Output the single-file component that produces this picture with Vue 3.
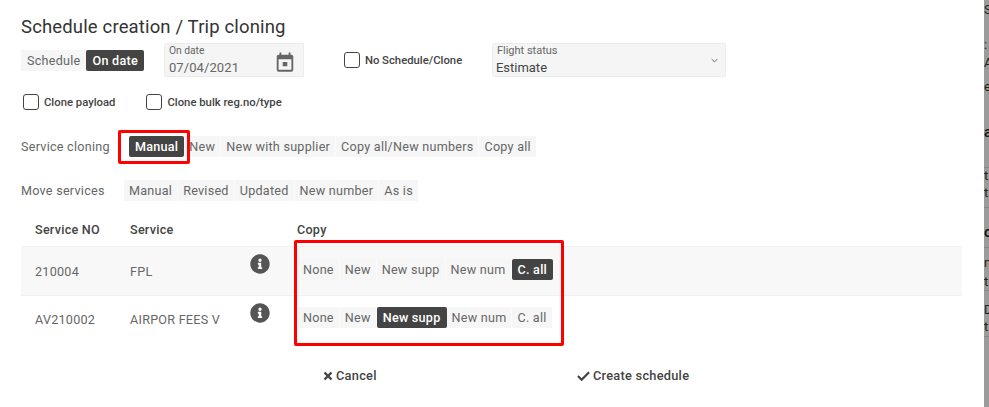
<template>
  <div class="page">
    <div class="dialog">
      <h2 class="title">Schedule creation / Trip cloning</h2>

      <div class="top-row">
        <div class="seg schedule-seg">
          <span class="seg-label">Schedule</span>
          <span class="seg-item active">On date</span>
        </div>
        <div class="field date-field">
          <div class="field-label">On date</div>
          <div class="field-value date-value">07/04/2021</div>
          <svg class="calendar" viewBox="0 0 24 24" width="22" height="22">
            <path fill="#666" fill-rule="evenodd" d="M8 1.500v2.500h8V1.500h2V4h1a2 2 0 0 1 2 2v14.500a2 2 0 0 1-2 2H5a2 2 0 0 1-2-2V6a2 2 0 0 1 2-2h1V1.500zM5 9v11.500h14V9zm4.500 3h5v4.500h-5z" />
          </svg>
        </div>
        <label class="check no-schedule"><span class="box"></span>No Schedule/Clone</label>
        <div class="field status-field">
          <div class="field-label">Flight status</div>
          <div class="field-value">Estimate</div>
          <svg class="chevron" viewBox="0 0 10 6" width="7" height="5">
            <path d="M1 1l4 4 4-4" fill="none" stroke="#666" stroke-width="1.4" />
          </svg>
        </div>
      </div>

      <div class="check-row">
        <label class="check"><span class="box"></span>Clone payload</label>
        <label class="check"><span class="box"></span>Clone bulk reg.no/type</label>
      </div>

      <div class="option-row cloning-row">
        <span class="row-label">Service cloning</span>
        <div class="seg">
          <span v-for="(o, i) in cloningOptions" :key="o" class="seg-item" :class="{ active: i === 0 }">{{ o }}</span>
        </div>
      </div>

      <div class="option-row move-row">
        <span class="row-label">Move services</span>
        <div class="seg">
          <span v-for="o in moveOptions" :key="o" class="seg-item">{{ o }}</span>
        </div>
      </div>

      <div class="table">
        <div class="table-head">
          <span>Service NO</span>
          <span>Service</span>
          <span></span>
          <span>Copy</span>
        </div>
        <div v-for="row in rows" :key="row.no" class="table-row" :class="{ shaded: row.shaded }">
          <span class="cell-text">{{ row.no }}</span>
          <span class="cell-text">{{ row.name }}</span>
          <svg class="info" viewBox="0 0 512 512" width="20" height="20">
            <path fill="#555" d="M256 8C119 8 8 119 8 256s111 248 248 248 248-111 248-248S393 8 256 8zm0 110a42 42 0 1 1 0 84 42 42 0 0 1 0-84zm56 254c0 7-5 12-12 12h-88c-7 0-12-5-12-12v-24c0-7 5-12 12-12h12v-64h-12c-7 0-12-5-12-12v-24c0-7 5-12 12-12h64c7 0 12 5 12 12v100h12c7 0 12 5 12 12z" />
          </svg>
          <div class="seg copy-seg">
            <span v-for="(o, i) in copyOptions" :key="o" class="seg-item" :class="{ active: i === row.active }">{{ o }}</span>
          </div>
        </div>
      </div>

      <div class="actions">
        <button class="action cancel">
          <svg viewBox="0 0 10 10" width="10" height="10"><path d="M1.500 1.500l7 7M8.500 1.500l-7 7" stroke="#444" stroke-width="2.400" fill="none" /></svg>
          Cancel
        </button>
        <button class="action">
          <svg viewBox="0 0 14 10" width="13" height="10"><path d="M1 5l4 4 8-8" stroke="#444" stroke-width="2.400" fill="none" /></svg>
          Create schedule
        </button>
      </div>

      <div class="red-box manual-mark"></div>
      <div class="red-box copy-mark"></div>
    </div>

    <div class="backdrop">
      <div v-for="(b, i) in backdropLines" :key="i" class="back-line" :class="{ rule: b.rule, strong: b.strong }" :style="{ height: b.h + 'px' }">{{ b.t }}</div>
    </div>
  </div>
</template>

<script setup>
const cloningOptions = ['Manual', 'New', 'New with supplier', 'Copy all/New numbers', 'Copy all']
const moveOptions = ['Manual', 'Revised', 'Updated', 'New number', 'As is']
const copyOptions = ['None', 'New', 'New supp', 'New num', 'C. all']

const rows = [
  { no: '210004', name: 'FPL', active: 4, shaded: true },
  { no: 'AV210002', name: 'AIRPOR FEES V', active: 2, shaded: false }
]

// page behind the dialog, only its left edge is visible
const backdropLines = [
  { t: '', h: 2 },
  { t: 'S', h: 35 },
  { t: ':', h: 18 },
  { t: 'A', h: 24 },
  { t: 'e', h: 45 },
  { t: 'a', h: 43, strong: true },
  { t: '', h: 1, rule: true },
  { t: 't', h: 17 },
  { t: 't', h: 22 },
  { t: '', h: 1, rule: true },
  { t: '', h: 16 },
  { t: 'o', h: 23, strong: true },
  { t: '', h: 1, rule: true },
  { t: '', h: 7 },
  { t: 'n', h: 19 },
  { t: 't', h: 16 },
  { t: '', h: 1, rule: true },
  { t: '', h: 11 },
  { t: 'D', h: 17 },
  { t: 't', h: 17 },
  { t: '', h: 1, rule: true }
]
</script>

<style scoped>
.page {
  display: flex;
  width: 989px;
  height: 407px;
  overflow: hidden;
  font-family: Roboto, "Liberation Sans", sans-serif;
  color: #555;
  background: white;
}

.dialog {
  position: relative;
  width: 984px;
  box-sizing: border-box;
  padding: 17px 22px 0 21px;
}

.title {
  margin: 0;
  font-size: 18.500px;
  line-height: 21px;
  font-weight: 400;
  color: #333;
  letter-spacing: 0.15px;
}

.top-row {
  display: flex;
  align-items: center;
  height: 34px;
  margin-top: 5px;
}

.seg {
  display: inline-flex;
  align-items: center;
  height: 21px;
  background: #f6f6f6;
  font-size: 12.600px;
  letter-spacing: 0.25px;
  color: #666;
}

.seg-label {
  padding: 0 6px;
}

.seg-item {
  display: flex;
  align-items: center;
  height: 100%;
  padding: 0 5px;
  border-right: 1px solid #fbfbfb;
  white-space: nowrap;
}

.seg-item:last-child {
  border-right: none;
}

.seg-item.active {
  padding: 0 6px;
  background: #444;
  color: white;
  font-weight: 500;
  border-radius: 2px;
  border-right: none;
}

.field {
  position: relative;
  box-sizing: border-box;
  height: 34px;
  background: #f5f5f5;
  border: 1px solid #ececec;
  border-radius: 2px;
}

.field-label {
  font-size: 10.300px;
  line-height: 11px;
  margin: 1px 0 0 4px;
  color: #666;
}

.field-value {
  font-size: 13px;
  line-height: 16px;
  margin: 4px 0 0 4px;
  color: #444;
}

.date-field {
  width: 140px;
  margin-left: 20px;
}

.date-value {
  letter-spacing: 0.1px;
  color: #666;
}

.calendar {
  position: absolute;
  top: 7px;
  right: 7px;
}

.status-field {
  width: 234px;
}

.status-field .field-label {
  font-size: 11px;
}

.status-field .field-value {
  margin-left: 3px;
}

.chevron {
  position: absolute;
  top: 14px;
  right: 7px;
}

.check {
  display: inline-flex;
  align-items: center;
  gap: 5px;
  font-size: 11.300px;
  font-weight: 500;
  color: #444;
}

.box {
  box-sizing: border-box;
  width: 16px;
  height: 16px;
  border: 1.500px solid #444;
  border-radius: 3px;
  background: white;
}

.no-schedule {
  margin-left: 40px;
  width: 148px;
}

.check-row {
  display: flex;
  gap: 31px;
  height: 16px;
  margin: 17px 0 0 2px;
}

.option-row {
  display: flex;
  align-items: center;
}

.row-label {
  font-size: 12.600px;
  letter-spacing: 0.25px;
  color: #666;
}

.cloning-row {
  margin-top: 26px;
}

.cloning-row .row-label {
  width: 108px;
}

.move-row {
  margin-top: 23px;
}

.move-row .row-label {
  width: 103px;
}

.table {
  margin-top: 13px;
}

.table-head,
.table-row {
  display: grid;
  grid-template-columns: 95px 120px 47px 1fr;
  align-items: center;
  padding-left: 14px;
}

.table-head {
  height: 32px;
  box-sizing: border-box;
  font-size: 12.600px;
  font-weight: 500;
  letter-spacing: 0.25px;
  color: #444;
  padding-bottom: 2px;
}

.table-row {
  height: 47px;
  box-sizing: border-box;
}

.table-row.shaded {
  height: 50px;
  background: #f8f8f8;
  border-top: 1px solid #f0f2f1;
  border-bottom: 1px solid #f0f2f1;
}

.cell-text {
  font-size: 12.600px;
  letter-spacing: 0.25px;
  color: #666;
}

.info {
  margin: -14px 0 0 0;
}

.copy-seg {
  justify-self: start;
  margin-top: -4px;
  margin-left: 1px;
}

.actions {
  display: flex;
  margin: 25px 0 0 302px;
}

.action {
  display: inline-flex;
  align-items: center;
  gap: 3px;
  padding: 0;
  border: none;
  background: none;
  font-family: inherit;
  font-size: 12.800px;
  font-weight: 500;
  letter-spacing: 0.25px;
  color: #444;
}

.cancel {
  width: 254px;
}

.red-box {
  position: absolute;
  box-sizing: border-box;
  border: 3px solid #f00;
  border-radius: 2px;
}

.manual-mark {
  left: 118px;
  top: 130px;
  width: 72px;
  height: 34px;
}

.copy-mark {
  left: 294px;
  top: 240px;
  width: 270px;
  height: 106px;
}

.backdrop {
  width: 5px;
  height: 407px;
  overflow: hidden;
  background: #9b9b9b;
  font-size: 13px;
  color: #222;
}

.back-line {
  line-height: 16px;
  overflow: hidden;
}

.back-line.strong {
  font-size: 15px;
  font-weight: 500;
  color: #111;
}

.back-line.rule {
  background: #888;
}
</style>
